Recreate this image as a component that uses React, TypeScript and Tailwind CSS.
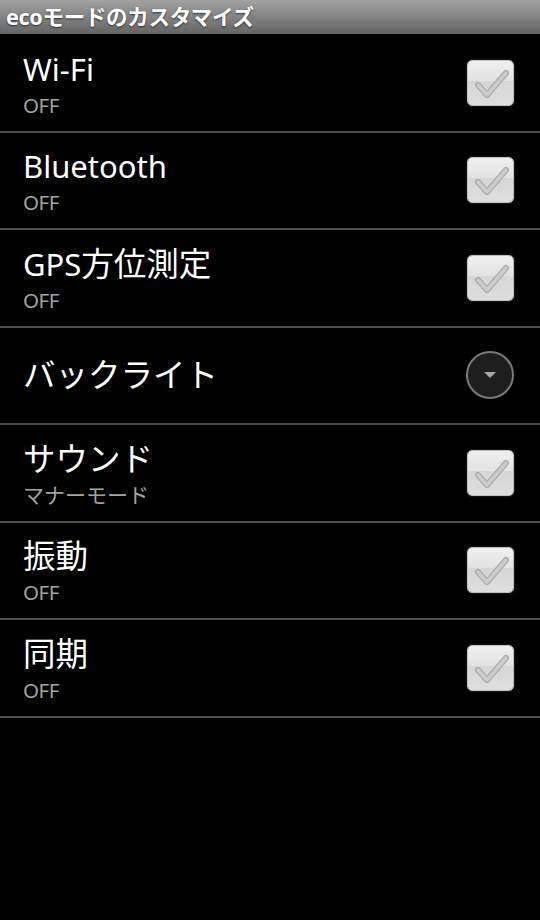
import React from "react";

const font = { fontFamily: '"Noto Sans", "Noto Sans CJK JP", sans-serif' };

function CheckBox() {
  return (
    <div className="relative w-[47px] h-[46px] rounded-[5px] overflow-hidden border border-[#bdbdbd] shadow-[0_0_2px_rgba(255,255,255,0.3)]">
      <div className="h-[45%] bg-gradient-to-b from-[#f0f0f0] to-[#e2e2e2]" />
      <div className="h-[55%] bg-gradient-to-b from-[#d6d6d6] to-[#dedede]" />
      <svg className="absolute inset-0" width="47" height="46" viewBox="0 0 47 46">
        <path
          d="M10 24 L19 34 L38 12"
          fill="none"
          stroke="#a9a9a9"
          strokeWidth="6"
          strokeLinecap="round"
          strokeLinejoin="round"
        />
        <path
          d="M10 24 L19 34 L38 12"
          fill="none"
          stroke="#cbcbcb"
          strokeWidth="3.5"
          strokeLinecap="round"
          strokeLinejoin="round"
        />
      </svg>
    </div>
  );
}

function Dropdown() {
  return (
    <div className="w-[48px] h-[48px] rounded-full border-2 border-[#7a7a7a] bg-[#1e1e1e] flex items-center justify-center">
      <svg width="16" height="10" viewBox="0 0 16 10">
        <path d="M2 2 L14 2 L8 8 Z" fill="#a8a8a8" />
      </svg>
    </div>
  );
}

type Row = { latin?: string; cjk?: string; sub?: string; kind: "check" | "drop" };

const rows: Row[] = [
  { latin: "Wi-Fi", sub: "OFF", kind: "check" },
  { latin: "Bluetooth", sub: "OFF", kind: "check" },
  { latin: "GPS", cjk: "方位測定", sub: "OFF", kind: "check" },
  { cjk: "バックライト", kind: "drop" },
  { cjk: "サウンド", sub: "マナーモード", kind: "check" },
  { cjk: "振動", sub: "OFF", kind: "check" },
  { cjk: "同期", sub: "OFF", kind: "check" },
];

export default function App() {
  return (
    <div className="w-[540px] h-[920px] bg-black overflow-hidden" style={font}>
      <div className="h-[34px] bg-gradient-to-b from-[#a2a2a2] to-[#646464] flex items-center pl-[6px]">
        <span
          className="text-white text-[21.5px] font-bold leading-none tracking-[-0.3px]"
          style={{ textShadow: "0 1px 2px rgba(0,0,0,0.6)" }}
        >
          ecoモードのカスタマイズ
        </span>
      </div>
      <div className="pt-[1px]">
        {rows.map((r, i) => (
          <div
            key={i}
            className="h-[97.5px] border-b-2 border-[#4d4d4d] flex items-center justify-between pl-[23px] pr-[26px]"
          >
            <div className="flex flex-col">
              <span className="text-white text-[31px] leading-[40px]">
                {r.latin}
                {r.cjk && <span className="text-[32.5px]">{r.cjk}</span>}
              </span>
              {r.sub && (
                <span className="text-[#a3a3a3] text-[20.5px] leading-[24px] mt-[4px]">
                  {r.sub === "OFF" ? <span className="tracking-[-0.5px]">OFF</span> : <span className="text-[21px]">{r.sub}</span>}
                </span>
              )}
            </div>
            {r.kind === "check" ? <CheckBox /> : <Dropdown />}
          </div>
        ))}
      </div>
    </div>
  );
}
